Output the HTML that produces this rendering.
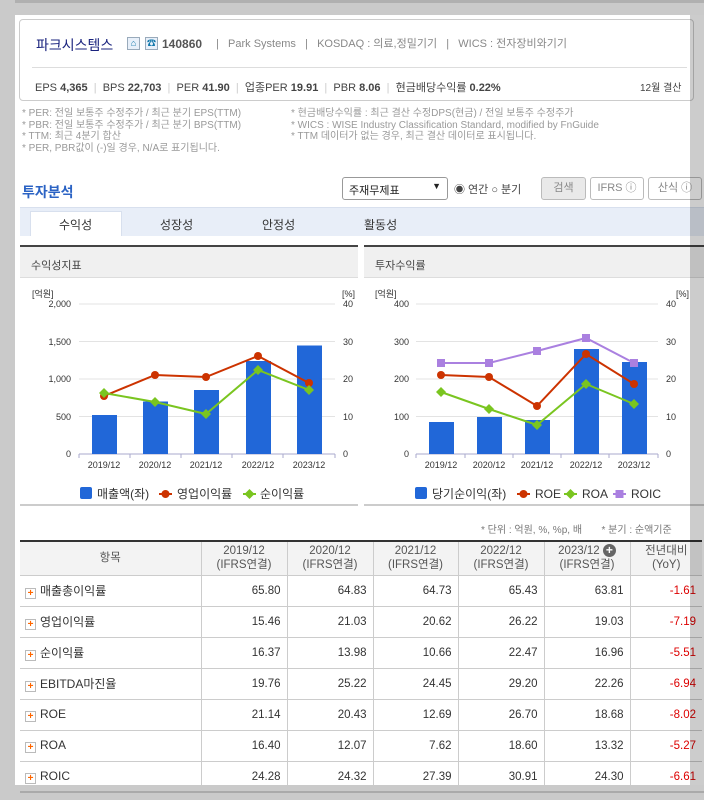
<!DOCTYPE html>
<html><head><meta charset="utf-8"><style>
*{box-sizing:border-box;margin:0;padding:0}
body{width:704px;height:800px;overflow:hidden;background:#fff;font-family:"Liberation Sans","Noto Sans CJK KR",sans-serif;position:relative;color:#333}
.a{position:absolute;white-space:nowrap}
.g{color:#777}
table{border-collapse:collapse;position:absolute;left:20px;top:540px;width:682px;font-size:12px}
td,th{border-bottom:1px solid #ccc;border-left:1px solid #ccc;height:31px}
th{background:#f3f3f3;font-weight:normal;color:#555;line-height:14px;height:34px;font-size:11.5px}
td{text-align:right;padding-right:6px;color:#333;font-size:11.5px}
td:first-child,th:first-child{border-left:none}
td:first-child{text-align:left;padding-left:5px;font-size:12px}
td.r{color:#d00}
.pl{display:inline-block;width:11px;height:11px;border:1px solid #bbb;color:#f60;font-size:10px;line-height:9px;text-align:center;font-weight:bold;margin-right:4px;vertical-align:-1px}
</style></head><body>
<div class="a" style="left:19px;top:19px;width:675px;height:82px;border:1px solid #ccc;border-radius:4px"></div>
<div class="a" style="left:36px;top:35px;font-size:14px;color:#1a237e">파크시스템스</div>
<div class="a" style="left:127px;top:37px;width:13px;height:13px;border:1px solid #9ab;background:#e8f0fa;font-size:9px;color:#17a;text-align:center;line-height:11px">⌂</div>
<div class="a" style="left:145px;top:37px;width:13px;height:13px;border:1px solid #9ab;background:#e8f0fa;font-size:9px;color:#17a;text-align:center;line-height:11px">☎</div>
<div class="a" style="left:162px;top:37px;font-size:12px;font-weight:bold;color:#555">140860</div>
<div class="a g" style="left:216px;top:35px;font-size:11px;color:#888">|&nbsp;&nbsp; Park Systems &nbsp;&nbsp;|&nbsp;&nbsp; KOSDAQ : 의료,정밀기기 &nbsp;&nbsp;|&nbsp;&nbsp; WICS : 전자장비와기기</div>
<div class="a" style="left:32px;top:67px;width:655px;height:1px;background:#ddd"></div>
<div class="a" style="left:35px;top:79px;font-size:11px;color:#444">EPS <b>4,365</b> <span style="color:#ccc">&nbsp;|&nbsp;</span> BPS <b>22,703</b> <span style="color:#ccc">&nbsp;|&nbsp;</span> PER <b>41.90</b> <span style="color:#ccc">&nbsp;|&nbsp;</span> 업종PER <b>19.91</b> <span style="color:#ccc">&nbsp;|&nbsp;</span> PBR <b>8.06</b> <span style="color:#ccc">&nbsp;|&nbsp;</span> 현금배당수익률 <b>0.22%</b></div>
<div class="a" style="left:640px;top:79px;font-size:10px;color:#444">12월 결산</div>
<div class="a" style="left:22px;top:108px;font-size:10px;color:#999;line-height:11.5px">* PER: 전일 보통주 수정주가 / 최근 분기 EPS(TTM)<br>* PBR: 전일 보통주 수정주가 / 최근 분기 BPS(TTM)<br>* TTM: 최근 4분기 합산<br>* PER, PBR값이 (-)일 경우, N/A로 표기됩니다.</div>
<div class="a" style="left:291px;top:108px;font-size:10px;color:#999;line-height:11.5px">* 현금배당수익률 : 최근 결산 수정DPS(현금) / 전일 보통주 수정주가<br>* WICS : WISE Industry Classification Standard, modified by FnGuide<br>* TTM 데이터가 없는 경우, 최근 결산 데이터로 표시됩니다.</div>
<div class="a" style="left:22px;top:182px;font-size:14px;font-weight:bold;color:#2b63c4">투자분석</div>
<div class="a" style="left:342px;top:177px;width:106px;height:23px;border:1px solid #999;border-radius:3px;font-size:11px;padding:4px 6px;color:#222">주재무제표<span style="position:absolute;right:6px;top:3px;font-size:9px">▼</span></div>
<div class="a" style="left:454px;top:181px;font-size:11px;color:#444">◉ 연간 ○ 분기</div>
<div class="a" style="left:541px;top:177px;width:45px;height:23px;border:1px solid #bbb;background:#e9e9e9;border-radius:3px;font-size:11px;color:#888;text-align:center;line-height:21px">검색</div>
<div class="a" style="left:590px;top:177px;width:54px;height:23px;border:1px solid #bbb;border-radius:3px;font-size:11px;color:#888;text-align:center;line-height:21px">IFRS ⓘ</div>
<div class="a" style="left:648px;top:177px;width:54px;height:23px;border:1px solid #bbb;border-radius:3px;font-size:11px;color:#888;text-align:center;line-height:21px">산식 ⓘ</div>
<div class="a" style="left:20px;top:207px;width:684px;height:29px;background:#e8eef8;border-top:1px solid #d8e0ee"></div>
<div class="a" style="left:30px;top:211px;width:92px;height:25px;background:#fff;border:1px solid #d8e0ee;border-bottom:none"></div>
<div class="a" style="left:59px;top:216px;font-size:12px;color:#333">수익성</div>
<div class="a" style="left:160px;top:216px;font-size:12px;color:#333">성장성</div>
<div class="a" style="left:262px;top:216px;font-size:12px;color:#333">안정성</div>
<div class="a" style="left:364px;top:216px;font-size:12px;color:#333">활동성</div>
<div class="a" style="left:20px;top:245px;width:338px;height:33px;background:#f0f0f0;border-top:2px solid #444;border-bottom:1px solid #ddd"></div>
<div class="a" style="left:31px;top:257px;font-size:11px;color:#444">수익성지표</div>
<div class="a" style="left:364px;top:245px;width:340px;height:33px;background:#f0f0f0;border-top:2px solid #444;border-bottom:1px solid #ddd"></div>
<div class="a" style="left:375px;top:257px;font-size:11px;color:#444">투자수익률</div>
<div class="a" style="left:20px;top:504px;width:338px;height:2px;background:#ccc"></div>
<div class="a" style="left:364px;top:504px;width:340px;height:2px;background:#ccc"></div>
<svg class="a" style="left:0;top:0" width="704" height="800" font-family="Liberation Sans" font-size="9" fill="#333">
<g stroke="#e3e3e3"><line x1="79" y1="304" x2="335" y2="304"/><line x1="79" y1="341.5" x2="335" y2="341.5"/><line x1="79" y1="379" x2="335" y2="379"/><line x1="79" y1="416.5" x2="335" y2="416.5"/></g>
<line x1="79" y1="454" x2="335" y2="454" stroke="#aac"/>
<g stroke="#aac"><line x1="79" y1="454" x2="79" y2="458"/><line x1="130" y1="454" x2="130" y2="458"/><line x1="181" y1="454" x2="181" y2="458"/><line x1="232" y1="454" x2="232" y2="458"/><line x1="283" y1="454" x2="283" y2="458"/><line x1="335" y1="454" x2="335" y2="458"/></g>
<text x="32" y="297">[억원]</text><text x="342" y="297">[%]</text>
<g text-anchor="end"><text x="71" y="307">2,000</text><text x="71" y="345">1,500</text><text x="71" y="382">1,000</text><text x="71" y="420">500</text><text x="71" y="457">0</text></g>
<g><text x="343" y="307">40</text><text x="343" y="345">30</text><text x="343" y="382">20</text><text x="343" y="420">10</text><text x="343" y="457">0</text></g>
<g text-anchor="middle"><text x="104" y="468">2019/12</text><text x="155" y="468">2020/12</text><text x="206" y="468">2021/12</text><text x="258" y="468">2022/12</text><text x="309" y="468">2023/12</text></g>
<g fill="#2167d8"><rect x="92" y="415" width="25" height="39"/><rect x="143" y="401.5" width="25" height="52.5"/><rect x="194" y="390" width="25" height="64"/><rect x="246" y="361" width="25" height="93"/><rect x="297" y="345.5" width="25" height="108.5"/></g>
<polyline points="104,396 155,375 206,377 258,356 309,383" fill="none" stroke="#cc3300" stroke-width="2"/>
<g fill="#cc3300"><circle cx="104" cy="396" r="4"/><circle cx="155" cy="375" r="4"/><circle cx="206" cy="377" r="4"/><circle cx="258" cy="356" r="4"/><circle cx="309" cy="383" r="4"/></g>
<polyline points="104,393 155,402 206,414 258,370 309,390" fill="none" stroke="#7ac520" stroke-width="2"/>
<g fill="#7ac520"><path d="M104 388l5 5-5 5-5-5z"/><path d="M155 397l5 5-5 5-5-5z"/><path d="M206 409l5 5-5 5-5-5z"/><path d="M258 365l5 5-5 5-5-5z"/><path d="M309 385l5 5-5 5-5-5z"/></g>
<g font-size="12"><rect x="80" y="487" width="12" height="12" fill="#2167d8" rx="2"/><text x="97" y="498">매출액(좌)</text>
<line x1="159" y1="494" x2="172" y2="494" stroke="#cc3300" stroke-width="2"/><circle cx="165.5" cy="494" r="4" fill="#cc3300"/><text x="177" y="498">영업이익률</text>
<line x1="243" y1="494" x2="256" y2="494" stroke="#7ac520" stroke-width="2"/><path d="M249.5 489l5 5-5 5-5-5z" fill="#7ac520"/><text x="260" y="498">순이익률</text></g>
<g stroke="#e3e3e3"><line x1="416" y1="304" x2="658" y2="304"/><line x1="416" y1="341.5" x2="658" y2="341.5"/><line x1="416" y1="379" x2="658" y2="379"/><line x1="416" y1="416.5" x2="658" y2="416.5"/></g>
<line x1="416" y1="454" x2="658" y2="454" stroke="#aac"/>
<g stroke="#aac"><line x1="416" y1="454" x2="416" y2="458"/><line x1="465" y1="454" x2="465" y2="458"/><line x1="513" y1="454" x2="513" y2="458"/><line x1="561" y1="454" x2="561" y2="458"/><line x1="609" y1="454" x2="609" y2="458"/><line x1="658" y1="454" x2="658" y2="458"/></g>
<text x="375" y="297">[억원]</text><text x="676" y="297">[%]</text>
<g text-anchor="end"><text x="409" y="307">400</text><text x="409" y="345">300</text><text x="409" y="382">200</text><text x="409" y="420">100</text><text x="409" y="457">0</text></g>
<g><text x="666" y="307">40</text><text x="666" y="345">30</text><text x="666" y="382">20</text><text x="666" y="420">10</text><text x="666" y="457">0</text></g>
<g text-anchor="middle"><text x="441" y="468">2019/12</text><text x="489" y="468">2020/12</text><text x="537" y="468">2021/12</text><text x="586" y="468">2022/12</text><text x="634" y="468">2023/12</text></g>
<g fill="#2167d8"><rect x="429" y="422" width="25" height="32"/><rect x="477" y="417" width="25" height="37"/><rect x="525" y="420" width="25" height="34"/><rect x="574" y="349" width="25" height="105"/><rect x="622" y="362" width="25" height="92"/></g>
<polyline points="441,363 489,363 537,351 586,338 634,363" fill="none" stroke="#aa80e0" stroke-width="2"/>
<g fill="#aa80e0"><rect x="437" y="359" width="8" height="8"/><rect x="485" y="359" width="8" height="8"/><rect x="533" y="347" width="8" height="8"/><rect x="582" y="334" width="8" height="8"/><rect x="630" y="359" width="8" height="8"/></g>
<polyline points="441,375 489,377 537,406 586,354 634,384" fill="none" stroke="#cc3300" stroke-width="2"/>
<g fill="#cc3300"><circle cx="441" cy="375" r="4"/><circle cx="489" cy="377" r="4"/><circle cx="537" cy="406" r="4"/><circle cx="586" cy="354" r="4"/><circle cx="634" cy="384" r="4"/></g>
<polyline points="441,392 489,409 537,425 586,384 634,404" fill="none" stroke="#7ac520" stroke-width="2"/>
<g fill="#7ac520"><path d="M441 387l5 5-5 5-5-5z"/><path d="M489 404l5 5-5 5-5-5z"/><path d="M537 420l5 5-5 5-5-5z"/><path d="M586 379l5 5-5 5-5-5z"/><path d="M634 399l5 5-5 5-5-5z"/></g>
<g font-size="12"><rect x="415" y="487" width="12" height="12" fill="#2167d8" rx="2"/><text x="432" y="498">당기순이익(좌)</text>
<line x1="517" y1="494" x2="530" y2="494" stroke="#cc3300" stroke-width="2"/><circle cx="523.5" cy="494" r="4" fill="#cc3300"/><text x="535" y="498">ROE</text>
<line x1="564" y1="494" x2="577" y2="494" stroke="#7ac520" stroke-width="2"/><path d="M570.5 489l5 5-5 5-5-5z" fill="#7ac520"/><text x="582" y="498">ROA</text>
<line x1="613" y1="494" x2="626" y2="494" stroke="#aa80e0" stroke-width="2"/><rect x="615.5" y="490" width="8" height="8" fill="#aa80e0"/><text x="631" y="498">ROIC</text></g>
</svg>
<div class="a" style="left:481px;top:521px;font-size:10px;color:#777">* 단위 : 억원, %, %p, 배 &nbsp;&nbsp;&nbsp;&nbsp;&nbsp; * 분기 : 순액기준</div>
<table>
<tr style="border-top:2px solid #333"><th style="width:181px">항목</th><th style="width:86px">2019/12<br>(IFRS연결)</th><th style="width:86px">2020/12<br>(IFRS연결)</th><th style="width:85px">2021/12<br>(IFRS연결)</th><th style="width:86px">2022/12<br>(IFRS연결)</th><th style="width:86px">2023/12 <span style="display:inline-block;width:13px;height:13px;border-radius:50%;background:#666;color:#fff;font-size:12px;line-height:12px;font-weight:bold">+</span><br>(IFRS연결)</th><th>전년대비<br>(YoY)</th></tr>
<tr><td><span class="pl">+</span>매출총이익률</td><td>65.80</td><td>64.83</td><td>64.73</td><td>65.43</td><td>63.81</td><td class="r">-1.61</td></tr>
<tr><td><span class="pl">+</span>영업이익률</td><td>15.46</td><td>21.03</td><td>20.62</td><td>26.22</td><td>19.03</td><td class="r">-7.19</td></tr>
<tr><td><span class="pl">+</span>순이익률</td><td>16.37</td><td>13.98</td><td>10.66</td><td>22.47</td><td>16.96</td><td class="r">-5.51</td></tr>
<tr><td><span class="pl">+</span>EBITDA마진율</td><td>19.76</td><td>25.22</td><td>24.45</td><td>29.20</td><td>22.26</td><td class="r">-6.94</td></tr>
<tr><td><span class="pl">+</span>ROE</td><td>21.14</td><td>20.43</td><td>12.69</td><td>26.70</td><td>18.68</td><td class="r">-8.02</td></tr>
<tr><td><span class="pl">+</span>ROA</td><td>16.40</td><td>12.07</td><td>7.62</td><td>18.60</td><td>13.32</td><td class="r">-5.27</td></tr>
<tr><td><span class="pl">+</span>ROIC</td><td>24.28</td><td>24.32</td><td>27.39</td><td>30.91</td><td>24.30</td><td class="r">-6.61</td></tr>
</table>
<div class="a" style="left:0;top:0;width:704px;height:15px;background:#cacaca;border-top:3px solid #b0b0b0"></div>
<div class="a" style="left:0;top:0;width:15px;height:800px;background:#cacaca"></div>
<div class="a" style="left:15px;top:785px;width:689px;height:15px;background:#cacaca"></div>
<div class="a" style="left:20px;top:791px;width:684px;height:2px;background:#aaa"></div>
<div class="a" style="left:690px;top:15px;width:14px;height:770px;background:rgba(0,0,0,0.2)"></div>
</body></html>
